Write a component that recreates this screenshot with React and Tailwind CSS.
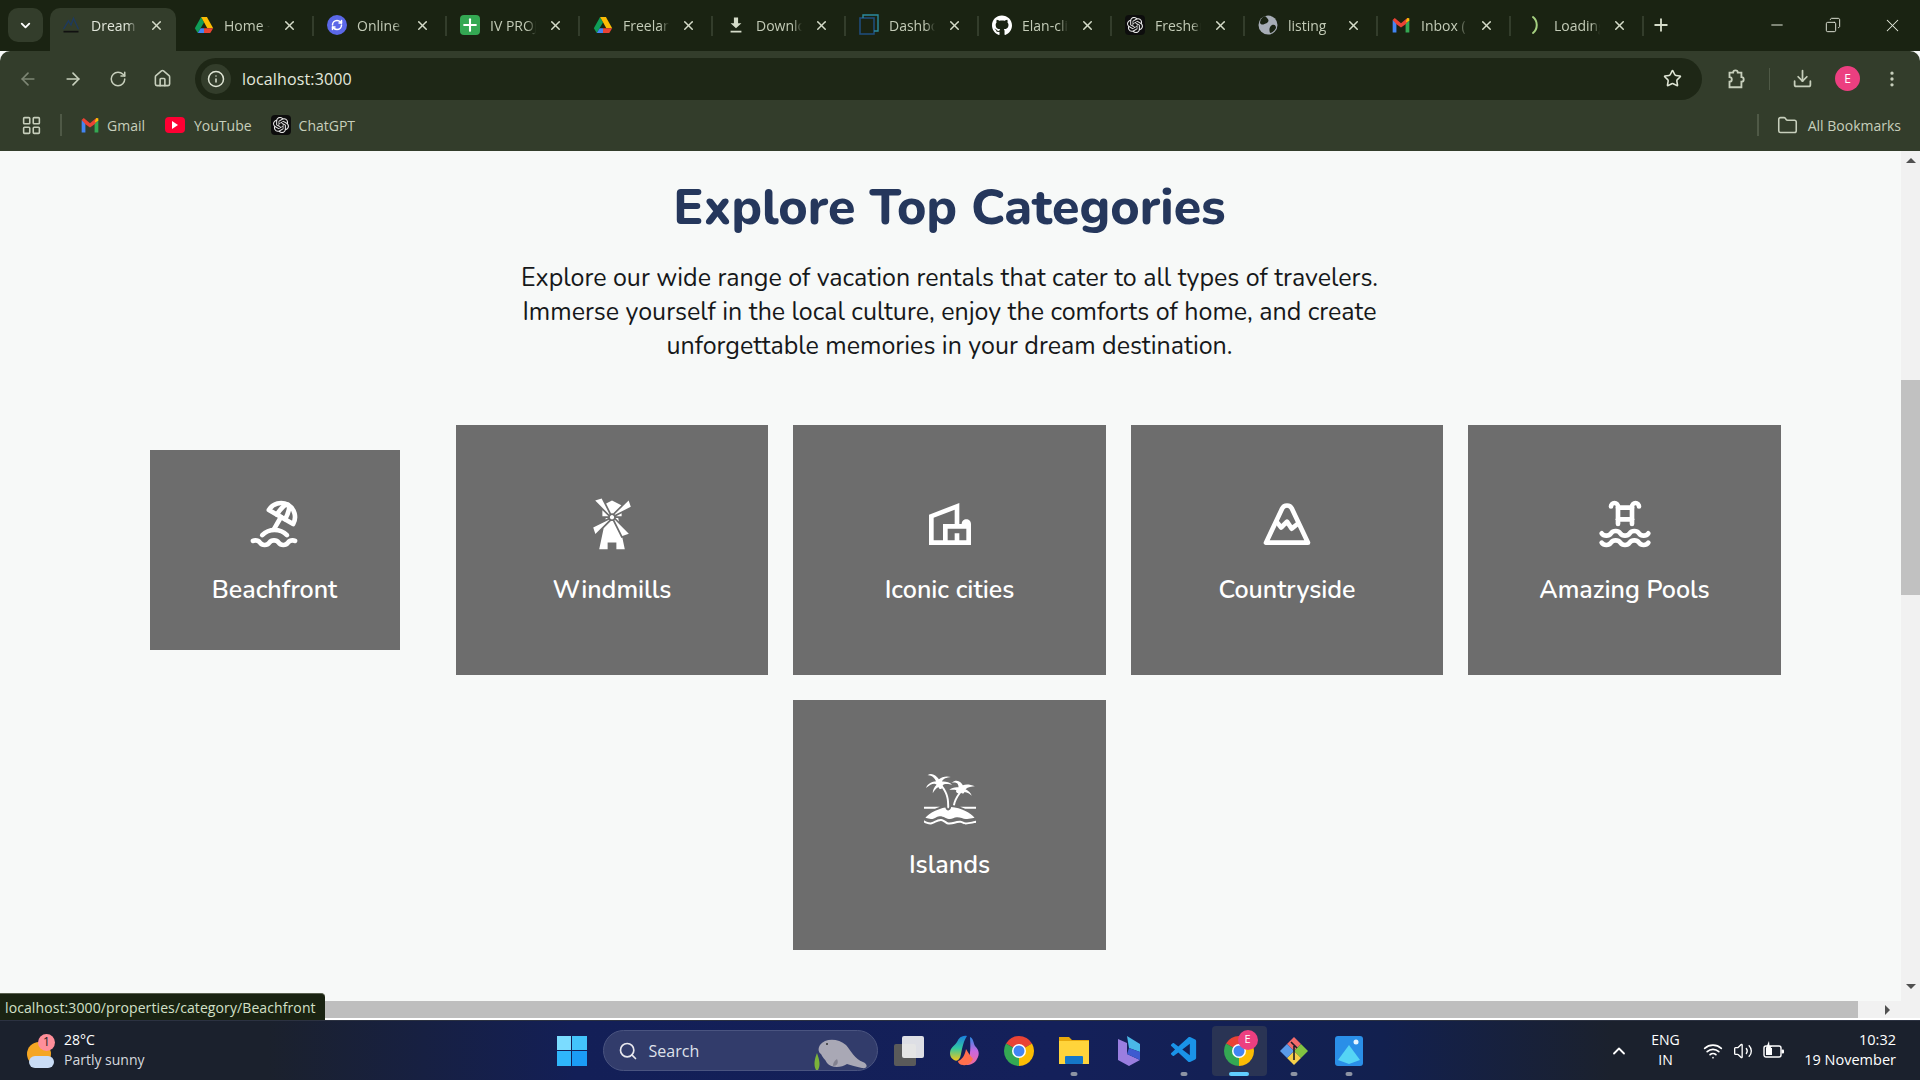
import React from "react";
import { TbBeach, TbMountain, TbPool } from "react-icons/tb";
import { GiWindmill, GiIsland } from "react-icons/gi";
import { MdOutlineVilla } from "react-icons/md";
import { FaGithub } from "react-icons/fa";
import { SiOpenai } from "react-icons/si";
import { VscVscode } from "react-icons/vsc";
import { ChevronDown, X, Plus, Minus, ArrowLeft, ArrowRight, RotateCw, Home, Info, Star, Download, MoreVertical, Folder, LayoutGrid, Search, ChevronUp, Wifi, Volume2, Copy, RefreshCw } from "lucide-react";

const Drive = ({ s = 18 }) => (
  <svg width={s} height={s} viewBox="0 0 24 24">
    <path d="M8.5 2.5 L1 16 L4.5 21.5 L12 9z" fill="#0f9d58" />
    <path d="M8.5 2.5 H15.5 L23 16 H16z" fill="#fbbc04" />
    <path d="M4.5 21.5 L8 16 H12 V21.5z" fill="#4285f4" />
    <path d="M12 16 H23 L19.5 21.5 H12z" fill="#ea4335" />
  </svg>
);
const Gmail = ({ s = 18 }) => (
  <svg width={s} height={s} viewBox="0 0 24 24">
    <path d="M2 6 V21 H6.5 V9z" fill="#4285f4" />
    <path d="M22 6 V21 H17.5 V9z" fill="#34a853" />
    <path d="M2 6 L4.5 3.5 L12 10 L19.5 3.5 L22 6 L17.5 11 L12 15 L6.5 11z" fill="#ea4335" />
    <path d="M17.5 9 L19.5 3.5 L22 4 V7z" fill="#fbbc04" />
  </svg>
);
const Chrome = ({ s = 30 }) => (
  <svg width={s} height={s} viewBox="0 0 24 24">
    <path d="M12 12 L1.61 6 A12 12 0 0 1 22.39 6z" fill="#ea4335" />
    <path d="M12 12 L22.39 6 A12 12 0 0 1 12 24z" fill="#fbbc04" />
    <path d="M12 12 L12 24 A12 12 0 0 1 1.61 6z" fill="#34a853" />
    <circle cx="12" cy="12" r="5.6" fill="#fff" />
    <circle cx="12" cy="12" r="4.4" fill="#4285f4" />
  </svg>
);
const OpenAiIcon = () => (
  <span className="w-5 h-[20px] rounded bg-[#0d0d0d] flex items-center justify-center"><SiOpenai size={16} color="#e8e8e8" /></span>
);

const tabs = [
  { t: "Dream Host", active: true, i: (
    <svg width="20" height="20" viewBox="0 0 24 24"><path d="M3 17 L9 7 L12 12 L15 4 L21 17" fill="none" stroke="#1e3a5f" strokeWidth="1.6" /><rect x="3" y="19" width="18" height="2" fill="#111" /></svg>
  ) },
  { t: "Home - Google Drive", i: <Drive s={20} /> },
  { t: "Online Tools", i: <span className="w-5 h-5 rounded-full bg-[#5b68e8] flex items-center justify-center"><RefreshCw size={12} color="#fff" strokeWidth={3} /></span> },
  { t: "IV PROJECT", i: <span className="w-5 h-5 rounded-sm bg-[#34a853] flex items-center justify-center"><Plus size={20} color="#fff" strokeWidth={2.5} /></span> },
  { t: "Freelance", i: <Drive s={20} /> },
  { t: "Downloads", i: <svg width="20" height="20" viewBox="0 0 24 24"><path d="M9.5 3h5v7h4L12 16 5.500 10h4z M5.500 19h13v2h-13z" fill="#d5dcc9" /></svg> },
  { t: "Dashboard", i: <svg width="20" height="22" viewBox="0 0 20 22" fill="none"><rect x="1" y="4" width="14" height="16" stroke="#1f4b7a" strokeWidth="1.6" /><path d="M4 4V1h15v16h-4" stroke="#2b8a9e" strokeWidth="1.4" /></svg> },
  { t: "Elan-client", i: <FaGithub size={21} color="#fff" /> },
  { t: "Freshers", i: <OpenAiIcon /> },
  { t: "listing", i: (
    <svg width="20" height="20" viewBox="0 0 20 20"><circle cx="10" cy="10" r="9.500" fill="#a7adb6" /><path d="M7 1 C10 4 12 5 9 8 C6 9 4 11 2 8 C2 5 4 2 7 1z M14 10 C17 9 18 11 18 13 C16 17 13 18 12 18 C11 15 11 12 14 10z" fill="#1a2312" /></svg>
  ) },
  { t: "Inbox (12)", i: <Gmail s={20} /> },
  { t: "Loading", i: <svg width="20" height="20" viewBox="0 0 20 20" fill="none"><path d="M9 2 C14 6 14 14 9 18" stroke="#a5d080" strokeWidth="2" strokeLinecap="round" /></svg> },
];

const cats = [
  { n: "Beachfront", I: TbBeach, small: true },
  { n: "Windmills", I: GiWindmill },
  { n: "Iconic cities", I: MdOutlineVilla },
  { n: "Countryside", I: TbMountain },
  { n: "Amazing Pools", I: TbPool },
  { n: "Islands", I: GiIsland },
];

function Tab({ t, i, active }) {
  return (
    <div className="relative w-[133px] h-[43px] flex items-center shrink-0 pb-[9px]">
      {active && <span className="absolute left-[2px] top-0 bottom-0 w-[126px] bg-[#333d2b] rounded-t-[10px]" />}
      <span className="absolute left-[13px] top-[7px] w-5 h-5 flex items-center justify-center">{i}</span>
      <span className={`relative ml-[43px] w-[46px] overflow-hidden whitespace-nowrap text-[14px] [mask-image:linear-gradient(to_right,black_80%,transparent)] ${active ? "text-[#e1e6da]" : "text-[#c3cbb7]"}`}>{t}</span>
      <X size={15} strokeWidth={2.4} className="absolute left-[101px] top-[10px] text-[#d5dcc9]" />
      {!active && <span className="absolute right-0 top-[8px] w-[2px] h-[20px] bg-[#333d2b]" />}
    </div>
  );
}

function Card({ n, I, small }) {
  return (
    <div className="w-[312.5px] h-[250px] flex items-center justify-center relative">
      <div className={`flex items-center justify-center bg-[#6d6d6d] ${small ? "w-[250px] h-[200px]" : "w-full h-full"}`}>
        <div className="flex flex-col items-center text-white pt-[3px]">
          <I size={56} />
          <div className="mt-[20px] text-[25px] leading-[36px] font-semibold font-['Nunito','Lato',sans-serif]">{n}</div>
        </div>
      </div>
    </div>
  );
}

const TBIcon = ({ children, dot, active }) => (
  <div className={`relative w-[55px] h-[50px] flex items-center justify-center rounded ${active ? "bg-[#2a3454]" : ""}`}>
    {children}
    {dot && <span className={`absolute bottom-0 left-1/2 -translate-x-1/2 h-[4px] rounded-full ${active ? "w-[20px] bg-[#60cdff]" : "w-[7px] bg-[#8d93a3]"}`} />}
  </div>
);

export default function App() {
  return (
    <div className="relative w-[1920px] h-[1080px] overflow-hidden flex flex-col bg-[#f7f9f8] font-['Open_Sans',sans-serif]">
      {/* tab strip */}
      <div className="h-[51px] bg-[#1a2312] flex items-end pl-[8px] shrink-0">
        <div className="w-[35px] h-[34px] self-start mt-[8px] rounded-[10px] bg-[#333d2b] flex items-center justify-center text-white"><ChevronDown size={15} strokeWidth={3} /></div>
        <div className="flex ml-[5px]">
          {tabs.map((x) => <Tab key={x.t} {...x} />)}
        </div>
        <div className="self-start mt-[15px] ml-[7px] text-[#d5dcc9]"><Plus size={20} strokeWidth={2.2} /></div>
        <div className="ml-auto self-start flex text-[#e8ecdf]">
          <div className="w-[56px] h-[50px] flex items-center justify-center"><Minus size={18} strokeWidth={1.3} /></div>
          <div className="w-[56px] h-[50px] mr-[3px] flex items-center justify-center"><Copy size={16} strokeWidth={1.4} className="-scale-x-100" /></div>
          <div className="w-[56px] h-[50px] flex items-center justify-center"><X size={21} strokeWidth={1.2} /></div>
        </div>
      </div>
      {/* toolbar */}
      <div className="h-[55px] bg-[#333d2b] flex items-center rounded-tr-[10px] rounded-tl-[10px] shrink-0 text-[#c7cfbc]">
        <div className="w-[45px] flex justify-center pl-[10px]"><ArrowLeft size={20} className="text-[#7d8674]" /></div>
        <div className="w-[45px] ml-[5px] flex justify-center"><ArrowRight size={20} /></div>
        <div className="w-[45px] flex justify-center"><RotateCw size={18} /></div>
        <div className="w-[45px] flex justify-center"><Home size={19} /></div>
        <div className="ml-[10px] w-[1507px] h-[42px] rounded-full bg-[#1e2716] flex items-center pl-[6px] pr-[20px]">
          <span className="w-[30px] h-[30px] rounded-full bg-[#333d2b] flex items-center justify-center"><Info size={18} className="text-[#dfe5d5]" /></span>
          <span className="ml-[11px] text-[16px] text-[#e4e9dd] tracking-[0.15px]">localhost:3000</span>
          <Star size={19} strokeWidth={2} className="ml-auto text-[#dfe5d5]" />
        </div>
        <svg className="ml-[22px]" width="22" height="22" viewBox="0 0 24 24" fill="none" stroke="currentColor" strokeWidth="2">
          <path d="M6 5 H10 A2.500 2.500 0 0 1 15 5 H19 V10 A2.500 2.500 0 0 1 19 15 V21 H6 V15 A2.500 2.500 0 0 0 6 10z" />
        </svg>
        <span className="ml-[23px] w-px h-[22px] bg-[#4f5946]" />
        <div className="ml-[22px]"><Download size={21} /></div>
        <span className="ml-[22px] w-[25px] h-[25px] rounded-full bg-[#ec3f80] text-white text-[12px] flex items-center justify-center">E</span>
        <div className="ml-[22px]"><MoreVertical size={20} /></div>
      </div>
      {/* bookmarks */}
      <div className="h-[45px] pb-[7px] bg-[#333d2b] flex items-center shrink-0 text-[14px] text-[#c7cfbc] pr-[19px]">
        <LayoutGrid size={21} strokeWidth={1.8} className="ml-[21px]" />
        <span className="ml-[18px] w-[2px] h-[22px] bg-[#4f5946]" />
        <span className="ml-[18px]"><Gmail s={20} /></span>
        <span className="ml-[7px]">Gmail</span>
        <span className="ml-[20px] w-5 h-[16px] rounded-[4px] bg-[#ff0033] flex items-center justify-center"><span className="w-0 h-0 border-y-[4px] border-y-transparent border-l-[6px] border-l-white" /></span>
        <span className="ml-[9px]">YouTube</span>
        <span className="ml-[19px]"><OpenAiIcon /></span>
        <span className="ml-[8px]">ChatGPT</span>
        <span className="ml-auto w-[2px] h-[22px] bg-[#4f5946]" />
        <Folder size={21} strokeWidth={1.8} className="ml-[18px]" />
        <span className="ml-[10px]">All Bookmarks</span>
      </div>
      {/* page */}
      <div className="flex-1 min-h-0 flex">
        <main className="w-[1901px] pr-[2px] overflow-hidden flex flex-col items-center">
          <h1 className="mt-[27px] text-[50px] leading-[60px] font-extrabold text-[#25375c] font-['Nunito','Lato',sans-serif]">Explore Top Categories</h1>
          <p className="mt-[23px] text-[25px] leading-[34px] text-center text-[#16181a] font-['Nunito','Lato',sans-serif]">
            Explore our wide range of vacation rentals that cater to all types of travelers.<br />
            Immerse yourself in the local culture, enjoy the comforts of home, and create<br />
            unforgettable memories in your dream destination.
          </p>
          <div className="mt-[62px] w-[1662.5px] flex flex-wrap justify-center gap-[25px]">
            {cats.map((c) => <Card key={c.n} {...c} />)}
          </div>
        </main>
        <div className="w-[19px] bg-[#f1f1f1] relative flex flex-col items-center">
          <span className="mt-[7px] w-0 h-0 border-x-[5px] border-x-transparent border-b-[5px] border-b-[#505050]" />
          <span className="mt-[217px] w-full h-[215px] bg-[#c1c1c1]" />
          <span className="mt-auto mb-[12px] w-0 h-0 border-x-[5px] border-x-transparent border-t-[5px] border-t-[#505050]" />
        </div>
      </div>
      {/* horizontal scrollbar */}
      <div className="h-[17px] shrink-0 flex bg-[#f1f1f1]">
        <div className="w-[1858px] bg-[#bebebe]" />
        <div className="flex-1 flex items-center pl-[27px]"><span className="w-0 h-0 border-y-[5px] border-y-transparent border-l-[5px] border-l-[#505050]" /></div>
      </div>
      <div className="h-[2px] bg-white shrink-0" />
      {/* taskbar */}
      <div className="h-[60px] shrink-0 flex items-center relative text-white bg-[linear-gradient(90deg,#1b212d_0%,#1b212d_14%,#131f57_30%,#14205a_55%,#12204f_72%,#1b212d_84%,#1b212d_100%)] border-t border-t-[#2c3241]">
        <div className="ml-[27px] relative w-[30px] h-[34px]">
          <span className="absolute left-0 top-[8px] w-[24px] h-[24px] rounded-full bg-[#f5a623]" />
          <span className="absolute left-[2px] top-[22px] w-[25px] h-[12px] rounded-full bg-[#c9dcf5]" />
          <span className="absolute left-[11px] top-0 w-[17px] h-[17px] rounded-full bg-[#ff8f9a] text-[#222] text-[12px] flex items-center justify-center">1</span>
        </div>
        <div className="ml-[7px] text-[14px] leading-[20px] -mt-[2px]">
          <div>28°C</div>
          <div className="text-[#d6d9df]">Partly sunny</div>
        </div>
        <div className="ml-[412px] w-[30px] h-[30px] grid grid-cols-2 gap-[1px]">
          <span className="bg-[#7bdcff]" /><span className="bg-[#43c4fb]" /><span className="bg-[#2fb6fb]" /><span className="bg-[#1b9cf5]" />
        </div>
        <div className="ml-[16px] relative w-[275px] h-[41px] rounded-full bg-[#323c6b] border border-[#4a5480] flex items-center pl-[14px]">
          <Search size={20} className="text-[#e8e8ee]" />
          <span className="ml-[11px] text-[16px] text-[#dfe1ea]">Search</span>
          <svg className="absolute right-[8px] top-[6px]" width="56" height="34" viewBox="0 0 56 34">
            <path d="M7 8 C12 1 25 1 33 8 C38 14 42 22 50 25 C55 27 55 32 49 31 C43 30 38 28 34 27 C28 31 18 31 14 26 C12 22 9 20 8 17 C5 15 5 11 7 8z" fill="#a9a8b5" />
            <path d="M24 22 C26 26 24 29 20 29 C20 26 21 24 24 22z" fill="#82818f" />
            <circle cx="14" cy="7" r="1" fill="#333" />
            <path d="M3 33 C0 28 2 21 4 16 C6 22 8 28 5 33z" fill="#7bb33a" />
          </svg>
        </div>
        <div className="ml-[4px] flex items-center">
          <TBIcon>
            <span className="relative w-[30px] h-[30px] block">
              <span className="absolute left-0 bottom-0 w-[22px] h-[22px] rounded-[2px] bg-[#5a5a5a]" />
              <span className="absolute right-0 top-0 w-[22px] h-[22px] rounded-[2px] bg-[#f4f4f4] opacity-90" />
            </span>
          </TBIcon>
          <TBIcon>
            <svg width="31" height="33" viewBox="0 0 31 33" fill="none">
              <defs>
                <linearGradient id="cp" x1="0" y1="0" x2="0" y2="1"><stop stopColor="#1b7fe0" /><stop offset="0.5" stopColor="#32c9a0" /><stop offset="1" stopColor="#f5c518" /></linearGradient>
                <linearGradient id="cq" x1="0" y1="0" x2="0" y2="1"><stop stopColor="#2b8ae8" /><stop offset="0.5" stopColor="#c868e0" /><stop offset="1" stopColor="#f06a9a" /></linearGradient>
              </defs>
              <path d="M8 8 C10 3 14 1 18 2 C15 6 13 14 12 20 C11 26 8 28 5 26 C1 24 0 19 2 15 C4 12 6 11 8 8z" fill="url(#cp)" />
              <path d="M21 3 C25 5 24 9 26 12 C30 16 31 20 28 25 C26 29 22 31 17 31 C21 25 22 17 21 3z" fill="url(#cq)" />
              <path d="M9 27 C13 26 16 21 17 15 C19 18 21 22 24 25 C22 29 18 32 14 31 C11 31 9 29 9 27z" fill="#ff6f4d" />
            </svg>
          </TBIcon>
          <TBIcon><Chrome /></TBIcon>
          <TBIcon dot>
            <svg width="30" height="30" viewBox="0 0 30 30">
              <path d="M0 1 H10 L13 4 H30 V28 H0z" fill="#e8a90c" />
              <rect x="0" y="5" width="30" height="23" fill="#ffd43b" />
              <rect x="6" y="20" width="18" height="8" rx="1" fill="#1577c9" />
            </svg>
          </TBIcon>
          <TBIcon>
            <svg width="28" height="30" viewBox="0 0 28 30">
              <path d="M3 3 L12 7 V18 L25 24 L14 30 L3 24z" fill="#9a7ee0" />
              <path d="M12 0 L25 8 V16 L14 12 z" fill="#4ab8e8" />
              <path d="M14 12 L25 16 V24 L12 18z" fill="#3d5bd0" />
            </svg>
          </TBIcon>
          <TBIcon dot><VscVscode size={31} color="#1a93e8" /></TBIcon>
          <TBIcon dot active>
            <Chrome />
            <span className="absolute right-[9px] top-[4px] w-[20px] h-[20px] rounded-full bg-[#ec3f80] text-white text-[11px] flex items-center justify-center">E</span>
          </TBIcon>
          <TBIcon dot>
            <svg width="30" height="30" viewBox="0 0 30 30">
              <path d="M15 15 L8 8 L15 1 L22 8z" fill="#f26b6b" />
              <path d="M15 15 L22 8 L29 15 L22 22z" fill="#82c341" />
              <path d="M15 15 L22 22 L15 29 L8 22z" fill="#f6cf4a" />
              <path d="M15 15 L8 22 L1 15 L8 8z" fill="#5a9bea" />
              <path d="M12 6 L18 12 M15 10 V24" stroke="#1c1c28" strokeWidth="1.6" />
            </svg>
          </TBIcon>
          <TBIcon dot>
            <svg width="28" height="30" viewBox="0 0 28 30">
              <rect width="28" height="30" rx="3" fill="#2a8fe8" />
              <path d="M3 24 L14 9 L25 24 L14 28z" fill="#55d4f5" />
              <circle cx="21" cy="6" r="2.500" fill="#e8f4ff" />
            </svg>
          </TBIcon>
        </div>
        <div className="ml-[232px] w-[20px] flex justify-center"><ChevronUp size={20} strokeWidth={2.2} /></div>
        <div className="ml-[18px] w-[38px] text-center text-[14px] leading-[20px] -mt-[2px]"><div>ENG</div><div>IN</div></div>
        <div className="ml-[18px] flex items-center gap-[10px]">
          <Wifi size={20} />
          <Volume2 size={20} strokeWidth={1.6} />
          <svg width="22" height="20" viewBox="0 0 22 20" fill="none">
            <rect x="1" y="5" width="17" height="11" rx="2" stroke="#fff" strokeWidth="1.4" />
            <rect x="18.500" y="8.500" width="2.500" height="4" rx="1" fill="#fff" />
            <rect x="3" y="7" width="6" height="7" fill="#fff" />
            <path d="M6 0 L3 7 H6 L5 11 L9 5 H6.500z" fill="#fff" />
          </svg>
        </div>
        <div className="ml-auto mr-[24px] text-right text-[14.5px] leading-[20px] -mt-[2px]"><div>10:32</div><div>19 November</div></div>
      </div>
      {/* status bubble */}
      <div className="absolute left-0 top-[993px] h-[27px] w-[325px] bg-[#1a2312] rounded-tr-[4px] border-t border-[#59604f] flex items-center pl-[5px] text-[14px] text-[#d3e0c8] tracking-[0.1px] whitespace-nowrap">localhost:3000/properties/category/Beachfront</div>
    </div>
  );
}
